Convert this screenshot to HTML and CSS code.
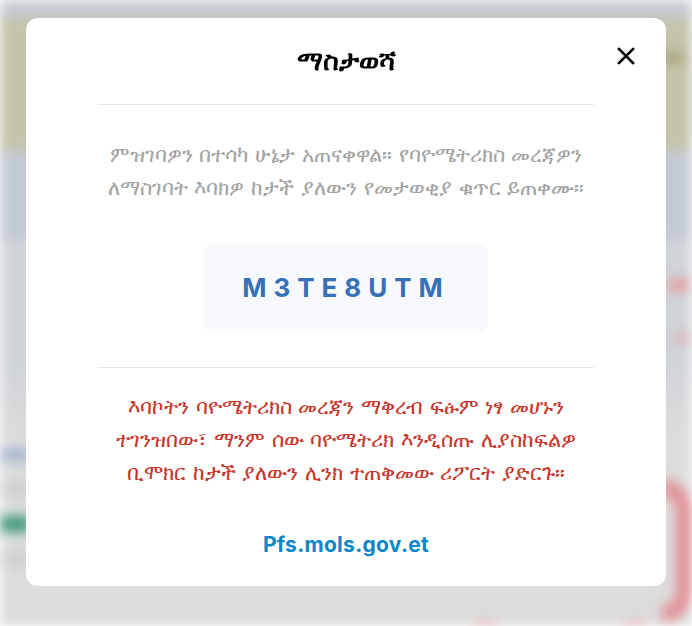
FILE: index.html
```html
<!DOCTYPE html>
<html lang="am">
<head>
<meta charset="utf-8">
<title>ማስታወሻ</title>
<link rel="stylesheet" href="styles.css">
</head>
<body>
<div class="backdrop" aria-hidden="true">
  <div class="bg-top"></div>
  <div class="bg-header"><span class="bg-knob"></span></div>
  <div class="bg-band"></div>
  <div class="bg-main">
    <div class="bg-left">
      <div class="bg-row blue"></div>
      <div class="bg-row grey"></div>
      <div class="bg-row green"></div>
      <div class="bg-row grey"></div>
    </div>
    <div class="bg-right">
      <div class="bg-dot"></div>
      <div class="bg-dot small"></div>
      <div class="bg-arc"></div>
    </div>
  </div>
  <div class="bg-bottom">
    <div class="bg-bar"></div>
    <div class="bg-blob"></div>
    <div class="bg-blob"></div>
  </div>
</div>

<div class="overlay">
  <div class="modal" role="dialog" aria-labelledby="mt">
    <div class="modal-head">
      <h2 id="mt" class="modal-title">ማስታወሻ</h2>
      <button class="close" aria-label="close">
        <svg width="18" height="18" viewBox="0 0 18 18"><path d="M2 2L16 16M16 2L2 16" stroke="#000" stroke-width="2.6" stroke-linecap="square"/></svg>
      </button>
    </div>
    <hr class="rule">
    <p class="info">ምዝገባዎን በተሳካ ሁኔታ አጠናቀዋል። የባዮሜትሪክስ መረጃዎን<br>ለማስገባት እባክዎ ከታች ያለውን የመታወቂያ ቁጥር ይጠቀሙ።</p>
    <div class="code-box"><span class="code">M3TE8UTM</span></div>
    <hr class="rule">
    <p class="warn">እባኮትን ባዮሜትሪክስ መረጃን ማቅረብ ፍፁም ነፃ መሆኑን<br>ተገንዝበው፣ ማንም ሰው ባዮሜትሪክ እንዲሰጡ ሊያስከፍልዎ<br>ቢሞክር ከታች ያለውን ሊንክ ተጠቅመው ሪፖርት ያድርጉ።</p>
    <a class="link" href="#">Pfs.mols.gov.et</a>
  </div>
</div>
</body>
</html>
```

FILE: styles.css
```css
html, body {
  margin: 0;
  padding: 0;
  width: 692px;
  height: 626px;
  overflow: hidden;
  font-family: "DejaVu Sans", "Noto Sans", sans-serif;
}

.backdrop {
  width: 692px;
  height: 626px;
  overflow: hidden;
  display: flex;
  flex-direction: column;
  background: #d9dadb;
  filter: blur(6px);
}
.bg-top { height: 18px; background: #c4cad2; flex: none; }
.bg-header {
  height: 132px;
  background: #c4c4ab;
  flex: none;
  display: flex;
  align-items: flex-start;
  justify-content: flex-end;
  padding: 34px 6px 0 0;
  box-sizing: border-box;
}
.bg-knob { width: 36px; height: 12px; background: #aba781; border-radius: 6px; }
.bg-band { height: 90px; background: #c3cad3; flex: none; }
.bg-main {
  flex: 1;
  display: flex;
  justify-content: space-between;
  background: linear-gradient(#d0d3d8 0, #d0d3d8 120px, #dcdcdc 200px);
}
.bg-left { width: 40px; display: flex; flex-direction: column; padding-top: 208px; gap: 20px; }
.bg-row { height: 14px; width: 30px; }
.bg-row.blue { background: #a9b8cf; }
.bg-row.grey { background: #cfcfcf; }
.bg-row.green { background: #3f9a7c; height: 16px; }
.bg-right { width: 34px; display: flex; flex-direction: column; align-items: flex-end; padding-top: 38px; gap: 40px; }
.bg-dot { width: 26px; height: 14px; border-radius: 50%; background: #e3a1a5; }
.bg-dot.small { width: 18px; height: 12px; background: #dbb4b8; }
.bg-arc { width: 14px; height: 110px; margin-top: 96px; border-radius: 0 60px 60px 0; border: 16px solid #e28f94; border-left: 0; }
.bg-bottom {
  height: 56px;
  flex: none;
  display: flex;
  align-items: flex-start;
  gap: 110px;
  background: #dcdcdc;
}
.bg-bar { width: 355px; height: 18px; margin-top: 12px; background: #adbccd; }
.bg-blob { width: 40px; height: 24px; border-radius: 50%; background: #e59a9e; }

.overlay {
  position: fixed;
  inset: 0;
  display: flex;
  justify-content: center;
  align-items: flex-start;
  padding-top: 18px;
}
.modal {
  width: 640px;
  height: 568px;
  box-sizing: border-box;
  background: #fff;
  border-radius: 12px;
  padding: 0 72px;
  display: flex;
  flex-direction: column;
  align-items: center;
}
.modal-head {
  width: 100%;
  height: 86px;
  flex: none;
  display: flex;
  align-items: center;
  justify-content: center;
  position: relative;
}
.modal-title {
  margin: 0;
  font-size: 27px;
  font-weight: 700;
  line-height: 34px;
  color: #000;
}
.close {
  position: absolute;
  right: -41px;
  top: 29px;
  border: 0;
  background: none;
  padding: 0;
  width: 18px;
  height: 18px;
  cursor: pointer;
}
.close svg { display: block; }
.rule {
  width: 100%;
  border: 0;
  border-top: 1px solid #e6e6e6;
  margin: 0;
  flex: none;
}
.info {
  margin: 33px 0 0;
  text-align: center;
  font-size: 21.3px;
  line-height: 33px;
  color: #a3a3a3;
  white-space: nowrap;
}
.code-box {
  margin-top: 40px;
  margin-bottom: 36px;
  width: 284px;
  height: 87px;
  flex: none;
  background: #f7f9fc;
  border-radius: 8px;
  display: flex;
  align-items: center;
  justify-content: center;
}
.code {
  font-family: Inter, "Open Sans", sans-serif;
  font-weight: 700;
  font-size: 26px;
  letter-spacing: 7px;
  color: #3570b8;
}
.warn {
  margin: 23px 0 0;
  text-align: center;
  font-size: 21px;
  line-height: 33px;
  color: #c8352a;
  white-space: nowrap;
}
.link {
  margin-top: 42px;
  font-family: Inter, "Open Sans", sans-serif;
  font-weight: 700;
  font-size: 21px;
  line-height: 26px;
  letter-spacing: 0.3px;
  color: #0b86c8;
  text-decoration: none;
}
```
